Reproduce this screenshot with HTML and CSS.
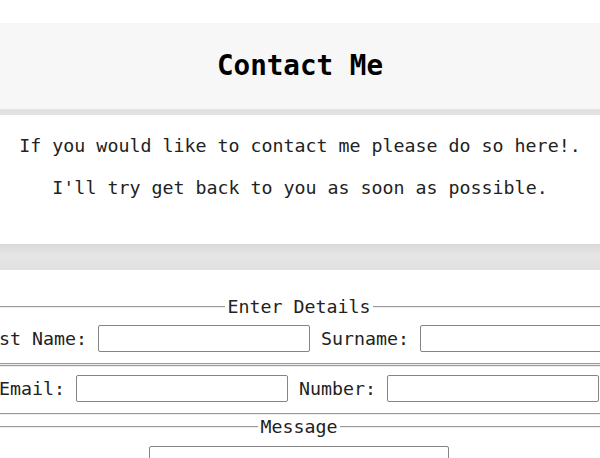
FILE: index.html
```html
<!DOCTYPE html>
<html lang="en">
<head>
<meta charset="utf-8">
<title>Contact Me</title>
<link rel="stylesheet" href="styles.css">
</head>
<body>
<header class="page-header">
  <h1 class="title">Contact Me</h1>
</header>
<section class="intro">
  <p>If you would like to contact me please do so here!.</p>
  <p>I'll try get back to you as soon as possible.</p>
</section>
<div class="band"></div>
<form class="contact-form">
  <fieldset class="group group-first">
    <legend class="legend">Enter Details</legend>
    <div class="row">
      <label class="label" for="fname">First Name:</label>
      <input class="field" id="fname" type="text">
      <label class="label" for="sname">Surname:</label>
      <input class="field" id="sname" type="text">
    </div>
  </fieldset>
  <fieldset class="group group-plain">
    <div class="row">
      <label class="label" for="email">Email:</label>
      <input class="field" id="email" type="text">
      <label class="label" for="number">Number:</label>
      <input class="field" id="number" type="text">
    </div>
  </fieldset>
  <fieldset class="group group-message">
    <legend class="legend">Message</legend>
    <div class="row">
      <textarea class="message" id="message"></textarea>
    </div>
  </fieldset>
</form>
</body>
</html>
```

FILE: styles.css
```css
html, body {
  overflow-x: hidden;
}

body {
  margin: 0;
  font-family: "DejaVu Sans Mono", monospace;
  font-size: 18.3px;
  line-height: 23px;
  color: #222;
  background: #fff;
}

.page-header {
  margin-top: 23px;
  height: 86px;
  background: #f7f7f7;
  border-bottom: 6px solid #e2e2e2;
  display: flex;
  align-items: center;
  justify-content: center;
}

.title {
  margin: 0;
  font-size: 27.6px;
  line-height: 32px;
  font-weight: bold;
  color: #000;
}

.intro {
  padding: 19px 0 45px;
  display: flex;
  flex-direction: column;
  gap: 19px;
  text-align: center;
}

.intro p {
  margin: 0;
}

.band {
  height: 26px;
  background: linear-gradient(#d9d9d9, #e6e6e6 45%, #e1e1e1);
}

.contact-form {
  padding-top: 25px;
  display: flex;
  flex-direction: column;
  align-items: center;
}

.group {
  width: 720px;
  box-sizing: border-box;
  margin: 0;
  border: 2px groove #eeeeee;
  min-width: 0;
}

.group-first {
  padding: 7px 12px 11px 10px;
}

.group-plain {
  padding: 8px 14px 11px 12px;
}

.group-message {
  padding: 8px 12px 11px 10px;
}

.legend {
  margin: 0 auto;
  padding: 0 2px;
  line-height: 23px;
}

.row {
  display: flex;
  justify-content: center;
  align-items: center;
  gap: 11px;
  white-space: nowrap;
}

.label {
  color: #222;
}

.field {
  width: 212px;
  height: 27px;
  box-sizing: border-box;
  margin: 0;
  border: 1px solid #858585;
  border-radius: 2px;
  background: #fff;
}

.message {
  width: 300px;
  height: 80px;
  box-sizing: border-box;
  margin: 0;
  border: 1px solid #858585;
  border-radius: 2px;
  resize: none;
}
```
